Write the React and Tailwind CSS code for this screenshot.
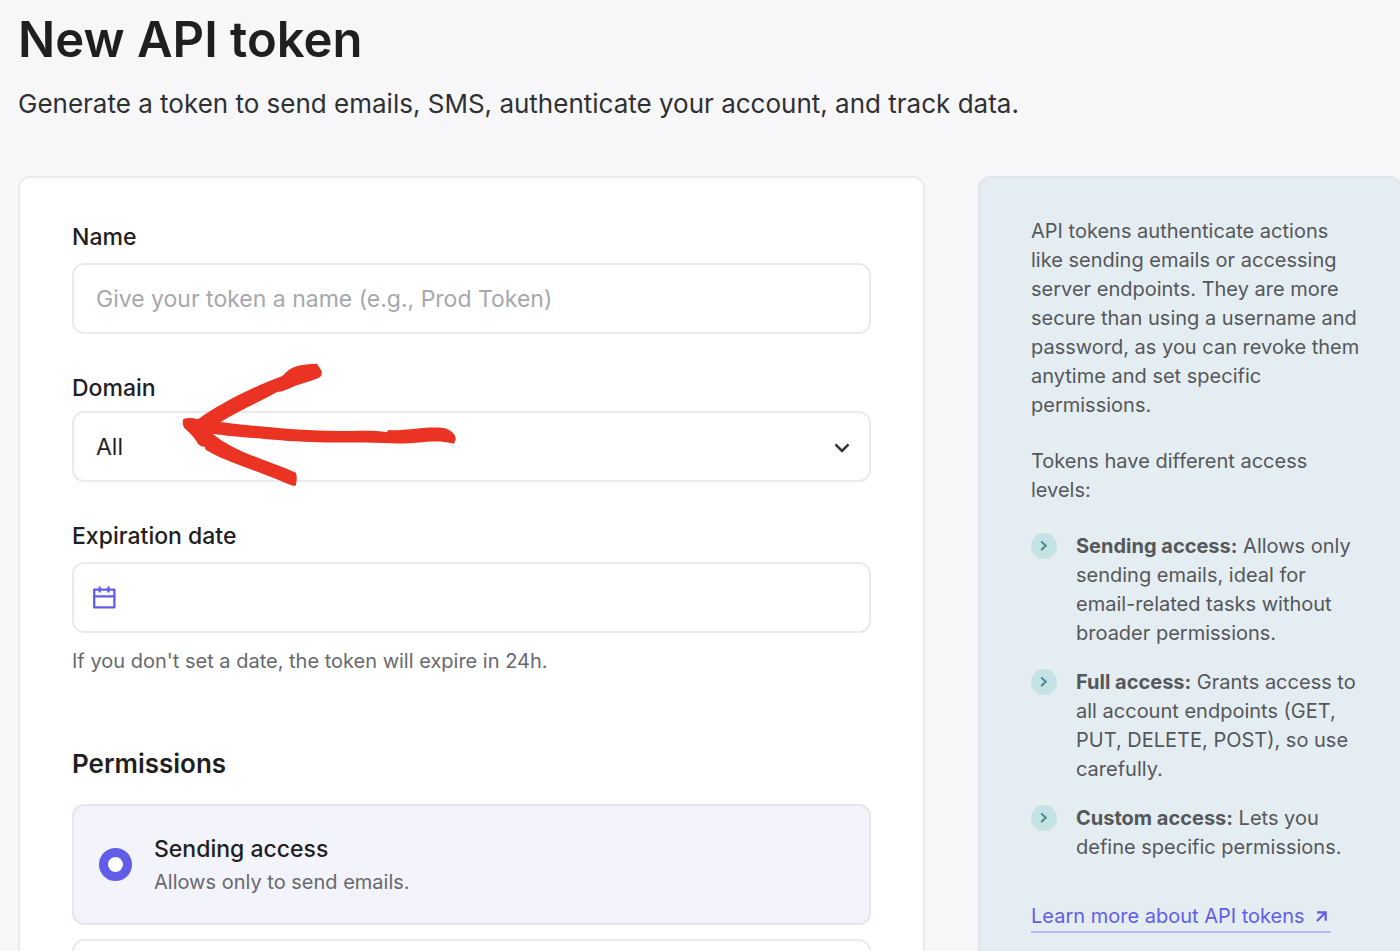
import React from "react";

const fieldClass =
  "block h-[71px] w-full rounded-xl border-2 border-[#ebebed] bg-white text-[23px] text-[#1f1f1f] outline-none placeholder:text-[#a6a8ad] placeholder:opacity-100";
const labelClass = "block text-[23px] leading-8 font-medium text-[#1f2022]";

const accessLevels = [
  {
    name: "Sending access:",
    text: "Allows only sending emails, ideal for email-related tasks without broader permissions.",
  },
  {
    name: "Full access:",
    text: "Grants access to all account endpoints (GET, PUT, DELETE, POST), so use carefully.",
  },
  { name: "Custom access:", text: "Lets you define specific permissions." },
];

function RedArrow() {
  return (
    <svg
      className="pointer-events-none absolute -top-[22px] left-[98px] h-[150px] w-[300px]"
      viewBox="0 0 900 450"
      fill="#ea3323"
      aria-hidden="true"
    >
      <path d="M40 207 Q60 201 84 208 C150 160 250 110 337 78 C365 45 395 43 441 41 L455 63 Q457 76 450 82 C415 97 390 102 370 110 C350 119 338 124 321 126 C270 155 205 183 152 216 C280 232 400 242 500 243 C570 243 610 239 651 247 L654 240 C700 244 750 229 815 233 C845 237 862 258 856 271 L852 281 C790 265 740 284 665 280 C580 275 500 280 425 276 C360 274 300 269 255 264 C210 262 165 256 128 251 C190 305 290 330 378 368 Q383 385 377 407 Q368 409 345 398 C260 362 155 330 107 299 L104 290 Q92 291 84 281 C70 258 57 247 43 234 Q35 223 40 207 Z" />
    </svg>
  );
}

function CalendarIcon() {
  return (
    <svg
      className="pointer-events-none absolute top-6 left-[21px] size-[23px]"
      viewBox="0 0 23 23"
      fill="none"
      stroke="#625de8"
      strokeWidth="2.3"
      strokeLinejoin="round"
      aria-hidden="true"
    >
      <path d="M1.200 3.600h20.200v17.800H1.200zM1.200 10.400h20.200M6.700 .4v6.200M15.500 .4v6.200" />
    </svg>
  );
}

function ChevronDownIcon() {
  return (
    <svg
      className="pointer-events-none absolute top-8 right-[21px] h-[10px] w-4"
      viewBox="0 0 16 10"
      fill="none"
      stroke="#333538"
      strokeWidth="2.6"
      aria-hidden="true"
    >
      <path d="M1.500 1.300 8 7.800l6.500-6.500" />
    </svg>
  );
}

function BulletIcon() {
  return (
    <svg className="mt-px size-[26px] shrink-0" viewBox="0 0 26 26" fill="none" aria-hidden="true">
      <circle cx="13" cy="13" r="13" fill="#c5e3e5" />
      <path d="M10.200 8.500 14.800 12.800l-4.600 4.300" stroke="#438a93" strokeWidth="2" />
    </svg>
  );
}

function ArrowUpRightIcon() {
  return (
    <svg className="size-[11px]" viewBox="0 0 11 11" fill="none" stroke="#625de8" strokeWidth="2.2" aria-hidden="true">
      <path d="M1 1.300h8.700v8.500M9.700 1.300 1 10" />
    </svg>
  );
}

export default function App() {
  return (
    <div className="h-screen overflow-hidden bg-[#f7f7f9] pl-[18px] font-['Inter',sans-serif] text-[#1f1f1f]">
      <header className="pt-[9px]">
        <h1 className="text-[49px] leading-[62px] font-semibold">New API token</h1>
        <p className="mt-[15px] text-[26px] leading-9 text-[#2f3033]">
          Generate a token to send emails, SMS, authenticate your account, and track data.
        </p>
      </header>

      <div className="mt-[54px] -mr-0.5 flex items-start gap-[53px]">
        <form className="min-w-0 flex-1 rounded-xl border-2 border-[#ebebed] bg-white px-[52px] pt-[43px] pb-12">
          <div>
            <label htmlFor="token-name" className={labelClass}>
              Name
            </label>
            <input
              id="token-name"
              type="text"
              placeholder="Give your token a name (e.g., Prod Token)"
              className={`${fieldClass} mt-[10px] px-[22px]`}
            />
          </div>

          <div className="relative mt-[38px]">
            <label htmlFor="token-domain" className={labelClass}>
              Domain
            </label>
            <div className="relative mt-[7px]">
              <select id="token-domain" className={`${fieldClass} appearance-none px-[22px] pt-0.5`}>
                <option>All</option>
              </select>
              <ChevronDownIcon />
            </div>
            <RedArrow />
          </div>

          <div className="mt-[38px]">
            <label htmlFor="token-expiration" className={labelClass}>
              Expiration date
            </label>
            <div className="relative mt-[10px]">
              <input
                id="token-expiration"
                type="text"
                aria-describedby="expiration-hint"
                className={`${fieldClass} pr-[22px] pl-[60px]`}
              />
              <CalendarIcon />
            </div>
            <p id="expiration-hint" className="mt-[14px] text-[20px] leading-7 text-[#67696d]">
              If you don't set a date, the token will expire in 24h.
            </p>
          </div>

          <fieldset className="mt-[71px]">
            <legend className="text-[26px] leading-9 font-semibold">Permissions</legend>
            <label
              htmlFor="sending-access"
              className="mt-[22px] flex h-[121px] items-center gap-[22px] rounded-xl border-2 border-[#e6e6ea] bg-[#f3f3fc] px-[25px]"
            >
              <input
                id="sending-access"
                type="radio"
                name="permission"
                defaultChecked
                className="size-[33px] shrink-0 appearance-none rounded-full border-[9px] border-[#625de8] bg-white"
              />
              <span className="block pb-0.5">
                <span className="block text-[23px] leading-9 font-medium">Sending access</span>
                <span className="block text-[20px] leading-[30px] text-[#67696d]">Allows only to send emails.</span>
              </span>
            </label>
            <div className="mt-[14px] h-[121px] rounded-xl border-2 border-[#ebebed] bg-white" />
          </fieldset>
        </form>

        <aside className="min-h-[1000px] w-[424px] shrink-0 rounded-xl border-2 border-[#e2e6ea] bg-[#e4edf2] pt-[39px] pr-9 pl-[51px] text-[20px] leading-[29px] text-[#55575a]">
          <p>
            API tokens authenticate actions like sending emails or accessing server endpoints. They are more secure
            than using a username and password, as you can revoke them anytime and set specific permissions.
          </p>
          <p className="mt-[27px]">Tokens have different access levels:</p>
          <ul className="mt-[27px] flex flex-col gap-5">
            {accessLevels.map((level) => (
              <li key={level.name} className="flex gap-[19px]">
                <BulletIcon />
                <span>
                  <strong className="font-bold">{level.name}</strong> {level.text}
                </span>
              </li>
            ))}
          </ul>
          <a
            href="#api-tokens"
            className="mt-10 inline-flex items-center gap-[11px] border-b-2 border-[#b9b8f0] pr-1 text-[#625de8]"
          >
            Learn more about API tokens
            <ArrowUpRightIcon />
          </a>
        </aside>
      </div>
    </div>
  );
}
